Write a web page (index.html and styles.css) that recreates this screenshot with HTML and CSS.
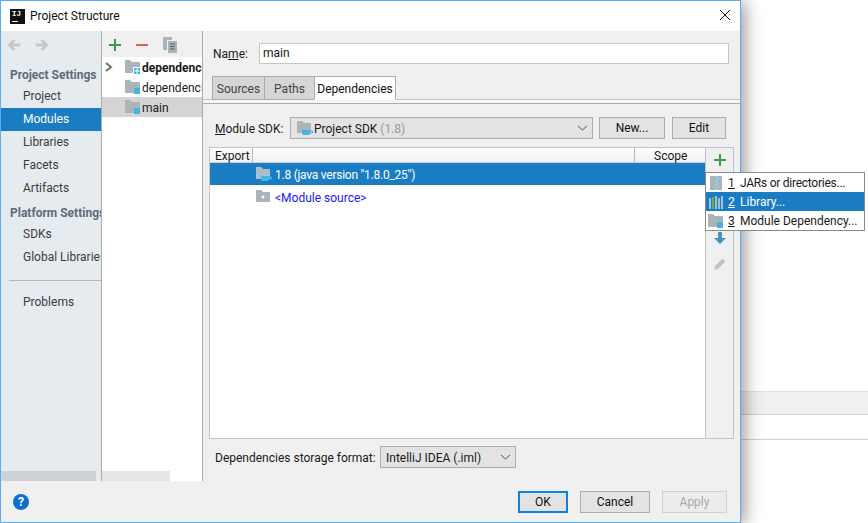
FILE: index.html
```html
<!DOCTYPE html>
<html lang="en">
<head>
<meta charset="utf-8">
<title>Project Structure</title>
<link rel="stylesheet" href="styles.css">
</head>
<body>
<div class="backdrop">
  <div class="strip strip-a"></div>
  <div class="strip strip-b"></div>
</div>
<div class="window">
  <header class="titlebar">
    <div class="logo"><span class="logo-text">IJ</span><span class="logo-bar"></span></div>
    <span class="title">Project Structure</span>
    <svg class="close" width="12" height="12" viewBox="0 0 12 12"><path d="M1 1L11 11M11 1L1 11" stroke="#111" stroke-width="1"/></svg>
  </header>
  <div class="main">
    <nav class="sidebar">
      <div class="nav-tools">
        <svg width="14" height="14" viewBox="0 0 14 14"><path d="M7.500 2L2.500 7L7.500 12M3 7H13.500" fill="none" stroke="#c8c8c8" stroke-width="3"/></svg>
        <svg width="14" height="14" viewBox="0 0 14 14"><path d="M6.500 2L11.500 7L6.500 12M11 7H0.500" fill="none" stroke="#c8c8c8" stroke-width="3"/></svg>
      </div>
      <div class="nav-head first">Project Settings</div>
      <div class="nav-item">Project</div>
      <div class="nav-item active">Modules</div>
      <div class="nav-item">Libraries</div>
      <div class="nav-item">Facets</div>
      <div class="nav-item">Artifacts</div>
      <div class="nav-head">Platform Settings</div>
      <div class="nav-item">SDKs</div>
      <div class="nav-item">Global Libraries</div>
      <div class="nav-sep"></div>
      <div class="nav-item">Problems</div>
      <div class="scroll scroll-nav"></div>
    </nav>
    <section class="modules">
      <div class="mod-tools">
        <svg width="14" height="14" viewBox="0 0 14 14"><path d="M7 1V13M1 7H13" stroke="#3a9c4a" stroke-width="2"/></svg>
        <svg width="14" height="14" viewBox="0 0 14 14"><path d="M1 7H13" stroke="#d9645f" stroke-width="2"/></svg>
        <svg class="copy" width="14" height="16" viewBox="0 0 14 16"><path d="M0 0H9V3H4V13H0Z" fill="#a9b4bb"/><path d="M5 4H14V16H5Z" fill="#a9b4bb"/><path d="M7 7H12M7 9.500H12M7 12H12" stroke="#5d6266" stroke-width="1"/></svg>
      </div>
      <div class="mod-row bold">
        <svg class="chev" width="8" height="10" viewBox="0 0 8 10"><path d="M1 1L6 5L1 9" fill="none" stroke="#6e6e6e" stroke-width="2"/></svg>
        <svg class="ficon" width="16" height="16" viewBox="0 0 16 16"><path d="M0 1H5L7 3H15V14H0Z" fill="#a9b4bb"/><path d="M8 8H16V16H8Z" fill="#fff"/><path d="M9 9H11.500V11.500H9ZM12.500 9H15V11.500H12.500ZM9 12.500H11.500V15H9ZM12.500 12.500H15V15H12.500Z" fill="#40b6e0"/></svg>
        <span class="row-text">dependencies</span>
      </div>
      <div class="mod-row">
        <svg class="ficon" width="16" height="16" viewBox="0 0 16 16"><path d="M0 1H5L7 3H15V14H0Z" fill="#a9b4bb"/><path d="M9 9H15V15H9Z" fill="#40b6e0"/></svg>
        <span class="row-text">dependencies_test</span>
      </div>
      <div class="mod-row selected">
        <svg class="ficon" width="16" height="16" viewBox="0 0 16 16"><path d="M0 1H5L7 3H15V14H0Z" fill="#a9b4bb"/><path d="M9 9H15V15H9Z" fill="#40b6e0"/></svg>
        <span class="row-text">main</span>
      </div>
      <div class="scroll scroll-mod"></div>
    </section>
    <section class="content">
      <div class="name-row">
        <label class="label">Na<u>m</u>e:</label>
        <div class="field">main</div>
      </div>
      <div class="tabs">
        <div class="tab">Sources</div>
        <div class="tab">Paths</div>
        <div class="tab active">Dependencies</div>
      </div>
      <div class="tab-rule"></div>
      <div class="sdk-row">
        <label class="label row-text"><u>M</u>odule SDK:</label>
        <div class="combo sdk-combo">
          <svg width="16" height="16" viewBox="0 0 16 16"><path d="M0 1H5L7 3H14V13H0Z" fill="#a9b4bb"/><path d="M5 10H13V13.500Q13 15 11 15H7Q5 15 5 13.500Z" fill="#40b6e0"/><path d="M13 11H15.500V13H13" fill="none" stroke="#40b6e0"/></svg>
          <span class="row-text">Project SDK <span class="muted">(1.8)</span></span>
          <svg class="caret" width="11" height="6" viewBox="0 0 11 6"><path d="M1 1L5.500 5L10 1" fill="none" stroke="#555"/></svg>
        </div>
        <div class="btn new">New...</div>
        <div class="btn edit">Edit</div>
      </div>
      <div class="table-wrap">
        <div class="table">
          <div class="thead">
            <div class="th th-export">Export</div>
            <div class="th th-blank"></div>
            <div class="th th-scope">Scope</div>
          </div>
          <div class="tr selected">
            <svg width="16" height="16" viewBox="0 0 16 16"><path d="M0 1H5L7 3H14V13H0Z" fill="#a9bfd0"/><path d="M5 10H13V13.500Q13 15 11 15H7Q5 15 5 13.500Z" fill="#40b6e0"/><path d="M13 11H15.500V13H13" fill="none" stroke="#40b6e0"/></svg>
            <span class="row-text tight">1.8 (java version "1.8.0_25")</span>
          </div>
          <div class="tr">
            <svg width="16" height="16" viewBox="0 0 16 16"><path d="M0 1H5L7 3H14V13H0Z" fill="#a9b4bb"/><circle cx="7" cy="8" r="1.500" fill="#fff"/></svg>
            <span class="row-text link">&lt;Module source&gt;</span>
          </div>
        </div>
        <div class="side-tools">
          <svg width="14" height="14" viewBox="0 0 14 14"><path d="M7 1V13M1 7H13" stroke="#3a9c4a" stroke-width="2"/></svg>
          <svg class="down" width="14" height="14" viewBox="0 0 14 14"><path d="M5 1H9V7H13L7 13L1 7H5Z" fill="#4a8fc0"/></svg>
          <svg class="pen" width="14" height="14" viewBox="0 0 14 14"><path d="M2 9L9.500 1.500L12.500 4.500L5 12L1.500 12.500Z" fill="#c4c4c4"/></svg>
        </div>
      </div>
      <div class="format-row">
        <span class="label row-text">Dependencies storage format:</span>
        <div class="combo format-combo">
          <span class="row-text">IntelliJ IDEA (.iml)</span>
          <svg class="caret" width="11" height="6" viewBox="0 0 11 6"><path d="M1 1L5.500 5L10 1" fill="none" stroke="#555"/></svg>
        </div>
      </div>
    </section>
  </div>
  <footer class="footer">
    <div class="help">?</div>
    <div class="btn ok">OK</div>
    <div class="btn cancel">Cancel</div>
    <div class="btn apply">Apply</div>
  </footer>
</div>
<div class="popup">
  <div class="pop-row">
    <svg width="16" height="16" viewBox="0 0 16 16"><path d="M2 1H14V15H2Z" fill="#a9b4bb"/><path d="M7 1H9V3H7ZM9 3H11V5H9ZM7 5H9V7H7ZM9 7H11V9H9ZM7 9H9V11H7ZM9 11H11V13H9ZM7 13H9V15H7Z" fill="#8fd0ee"/></svg>
    <span class="pop-num"><u>1</u></span><span class="tight">JARs or directories...</span>
  </div>
  <div class="pop-row active">
    <svg width="16" height="16" viewBox="0 0 16 16"><path d="M1 4H3V15H1Z" fill="#a9bfd0"/><path d="M4 3H6V15H4Z" fill="#62b543"/><path d="M7 2H9V15H7ZM10 4H12V15H10ZM13 2H15V15H13Z" fill="#a9bfd0"/></svg>
    <span class="pop-num"><u>2</u></span><span>Library...</span>
  </div>
  <div class="pop-row">
    <svg width="16" height="16" viewBox="0 0 16 16"><path d="M0 1H5L7 3H15V14H0Z" fill="#a9b4bb"/><path d="M9 9H15V15H9Z" fill="#40b6e0"/></svg>
    <span class="pop-num"><u>3</u></span><span>Module Dependency...</span>
  </div>
</div>
</body>
</html>
```
FILE: styles.css
```css
* { box-sizing: border-box; }
html, body { margin: 0; height: 100%; }
body {
  position: relative;
  width: 868px;
  height: 523px;
  overflow: hidden;
  background: #fff;
  font-family: "Roboto", "Noto Sans", sans-serif;
  font-size: 12px;
  color: #1a1a1a;
}
svg { display: block; flex: none; }
.backdrop { position: absolute; inset: 0; }
.strip { position: absolute; left: 0; right: 0; }
.strip-a { top: 391px; height: 24px; background: #f0f0f0; border-top: 1px solid #e0e0e0; border-bottom: 1px solid #d0d0d0; }
.strip-b { top: 415px; height: 25px; background: #fff; border-bottom: 1px solid #d0d0d0; }
.window {
  position: absolute;
  left: 0;
  top: 0;
  width: 741px;
  height: 523px;
  display: flex;
  flex-direction: column;
  background: #f0f0f0;
  border: 1px solid #5cacf5;
  box-shadow: 4px 2px 16px rgba(0, 0, 0, 0.4);
}
.titlebar { height: 30px; flex: none; display: flex; align-items: center; background: #fff; padding-left: 9px; position: relative; }
.logo { width: 15px; height: 15px; background: #111; position: relative; margin-right: 5px; }
.logo-text { position: absolute; left: 2px; top: 0; color: #fff; font-size: 7.500px; font-weight: 700; line-height: 10px; font-family: "Liberation Mono", monospace; }
.logo-bar { position: absolute; left: 2px; bottom: 2px; width: 6px; height: 1px; background: #fff; }
.title { color: #111; }
.close { position: absolute; left: 718px; top: 8px; }
.main { flex: 1; min-height: 0; display: flex; }
.sidebar { width: 101px; flex: none; background: #e6ebf0; border-right: 1px solid #acacac; position: relative; overflow: hidden; white-space: nowrap; }
.nav-tools { height: 31px; display: flex; gap: 14px; padding: 7px 0 0 6px; }
.nav-head { font-weight: 700; color: #5f6b78; height: 21px; line-height: 23px; padding-left: 9px; margin-top: 2px; }
.nav-head.first { margin-top: 1px; height: 22px; line-height: 25px; }
.nav-item { height: 23px; line-height: 23px; padding-left: 22px; color: #3c3c3c; }
.nav-item.active { background: #1a7dc4; color: #fff; }
.nav-sep { height: 1px; margin: 11px 0 10px 8px; background: #b4b8bb; }
.scroll { position: absolute; left: 0; bottom: 0; height: 10px; }
.scroll-nav { width: 95px; background: #ccd1d5; }
.scroll-mod { width: 68px; background: #e6e6e6; }
.modules { width: 101px; flex: none; background: #fff; border-right: 1px solid #acacac; position: relative; overflow: hidden; white-space: nowrap; }
.mod-tools { height: 26px; background: #f0f0f0; display: flex; align-items: center; gap: 13px; padding: 1px 0 0 6px; }
.copy { margin-left: 1px; }
.mod-row { height: 20px; display: flex; align-items: center; padding-left: 23px; gap: 1px; position: relative; }
.mod-row.bold { font-weight: 700; }
.mod-row.selected { background: #d4d4d4; }
.row-text { padding-top: 2px; }
.tight { letter-spacing: -0.25px; }
.chev { position: absolute; left: 3px; top: 5px; }
.content { flex: 1; min-width: 0; padding: 0 7px 0 6px; display: flex; flex-direction: column; }
.label { white-space: nowrap; color: #1a1a1a; }
.name-row { height: 45px; flex: none; display: flex; align-items: center; padding: 0 4px 0 4px; }
.name-row .label { width: 46px; }
.field { flex: 1; height: 21px; line-height: 19px; background: #fff; border: 1px solid #c6c6c6; padding-left: 3px; }
.tabs { height: 24px; flex: none; display: flex; border-bottom: 1px solid #c4c4c4; margin: 0 -7px 0 -6px; padding-left: 9px; }
.tab { height: 24px; line-height: 24px; background: #d6d6d6; border: 1px solid #acacac; margin-right: -1px; color: #444; text-align: center; }
.tab:nth-child(1) { width: 53px; }
.tab:nth-child(2) { width: 51px; }
.tab.active { width: 82px; background: #fff; border-bottom-color: #fff; color: #111; }
.tab-rule { height: 4px; flex: none; margin: 0 -7px 13px -6px; background: #f6f6f6; border-bottom: 1px solid #acacac; }
.sdk-row { height: 22px; flex: none; display: flex; align-items: center; padding-left: 6px; }
.sdk-row .label { width: 75px; }
.combo { height: 22px; display: flex; align-items: center; background: #e3e3e3; border: 1px solid #adadad; position: relative; gap: 1px; padding-left: 6px; }
.sdk-combo { width: 303px; }
.muted { color: #9a9a9a; }
.caret { position: absolute; right: 4px; top: 7px; }
.btn { height: 22px; line-height: 20px; text-align: center; background: #e3e3e3; border: 1px solid #adadad; color: #111; }
.new { width: 66px; margin-left: 6px; }
.edit { width: 54px; margin-left: 7px; }
.table-wrap { height: 292px; flex: none; display: flex; margin-top: 8px; border: 1px solid #c4c4c4; width: 525px; }
.table { width: 496px; flex: none; background: #fff; border-right: 1px solid #c4c4c4; }
.thead { height: 15px; display: flex; background: linear-gradient(#fff, #f0f0f0); border-bottom: 1px solid #d0d0d0; line-height: 16px; }
.th { padding-left: 5px; overflow: visible; white-space: nowrap; }
.th-export { width: 43px; border-right: 1px solid #bbb; }
.th-blank { width: 382px; border-right: 1px solid #bbb; }
.th-scope { flex: 1; padding-left: 19px; }
.tr { height: 22px; display: flex; align-items: center; padding-left: 46px; gap: 3px; }
.tr + .tr { height: 23px; }
.tr.selected { background: #1a7dc4; color: #fff; }
.link { color: #1a1af0; }
.side-tools { flex: 1; display: flex; flex-direction: column; align-items: center; padding-top: 5px; }
.down { margin-top: 64px; }
.pen { margin-top: 12px; }
.format-row { height: 22px; flex: none; display: flex; align-items: center; margin-top: 7px; padding-left: 6px; }
.format-row .label { width: 165px; }
.format-combo { width: 136px; padding-left: 5px; }
.footer { height: 41px; flex: none; display: flex; align-items: center; position: relative; padding-left: 12px; }
.help { width: 16px; height: 16px; border-radius: 50%; background: #0f6fcf; color: #fff; font-weight: 700; line-height: 16px; text-align: center; margin-right: 489px; }
.ok { width: 50px; border: 2px solid #0a84e0; line-height: 18px; }
.cancel { width: 70px; margin-left: 12px; }
.apply { width: 65px; margin-left: 12px; background: #ececec; border-color: #d0d0d0; color: #a8a8a8; }
.popup { position: absolute; left: 705px; top: 172px; width: 160px; height: 59px; background: #fff; border: 1px solid #8a8a8a; }
.pop-row { height: 19px; display: flex; align-items: center; padding-left: 2px; white-space: nowrap; }
.pop-row.active { background: #1a7dc4; color: #fff; }
.pop-num { width: 12px; margin-left: 4px; flex: none; }
```
